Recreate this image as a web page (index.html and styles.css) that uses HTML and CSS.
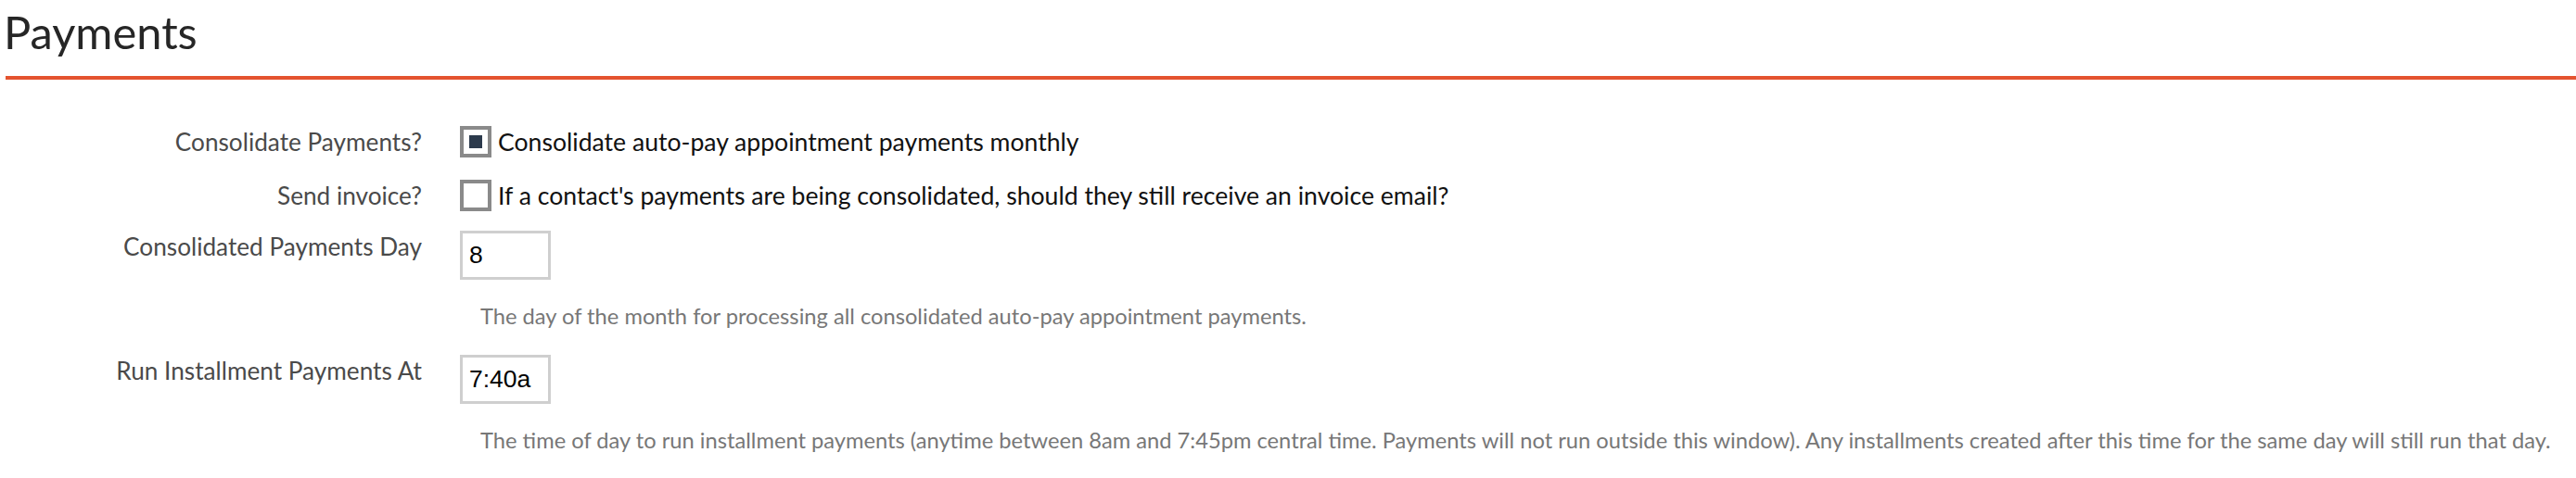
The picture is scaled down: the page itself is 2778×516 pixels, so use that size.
FILE: index.html
```html
<!DOCTYPE html>
<html lang="en">
<head>
<meta charset="utf-8">
<title>Payments</title>
<link rel="stylesheet" href="styles.css">
</head>
<body>
<div class="page">
  <h1 class="title">Payments</h1>
  <div class="form">
    <div class="row">
      <div class="label">Consolidate Payments?</div>
      <div class="control">
        <label class="check">
          <span class="box checked"><span class="mark"></span></span>
          <span class="check-text">Consolidate auto-pay appointment payments monthly</span>
        </label>
      </div>
    </div>
    <div class="row">
      <div class="label">Send invoice?</div>
      <div class="control">
        <label class="check">
          <span class="box"></span>
          <span class="check-text">If a contact's payments are being consolidated, should they still receive an invoice email?</span>
        </label>
      </div>
    </div>
    <div class="row row-field">
      <div class="label">Consolidated Payments Day</div>
      <div class="control">
        <input class="input" type="text" value="8">
        <p class="help">The day of the month for processing all consolidated auto-pay appointment payments.</p>
      </div>
    </div>
    <div class="row row-field">
      <div class="label">Run Installment Payments At</div>
      <div class="control">
        <input class="input" type="text" value="7:40a">
        <p class="help">The time of day to run installment payments (anytime between 8am and 7:45pm central time. Payments will not run outside this window). Any installments created after this time for the same day will still run that day.</p>
      </div>
    </div>
  </div>
</div>
</body>
</html>
```
FILE: styles.css
```css
html, body {
  margin: 0;
  padding: 0;
  background: #ffffff;
}

.page {
  font-family: "Lato", "Open Sans", sans-serif;
  color: #222;
}

.title {
  margin: 5px 0 0 6px;
  padding: 0 0 19px 0;
  font-size: 48.8px;
  line-height: 58px;
  font-weight: 400;
  color: #262626;
  text-indent: -2px;
  border-bottom: 4px solid #e4532f;
}

.form {
  display: flex;
  flex-direction: column;
  gap: 24px;
  padding-top: 50px;
}

.row {
  display: flex;
  align-items: flex-start;
}

.row-field {
  margin-top: -3px;
}

.row-field + .row-field {
  margin-top: 4px;
}

.label {
  flex: 0 0 455px;
  text-align: right;
  font-size: 26.2px;
  line-height: 32px;
  padding-top: 1px;
  color: #4a4a4a;
}

.control {
  margin-left: 41px;
  flex: 1 1 auto;
}

.check {
  display: flex;
  align-items: center;
  gap: 7px;
}

.box {
  box-sizing: border-box;
  width: 34px;
  height: 34px;
  border: 4px solid #8a8a8a;
  background: #fff;
  display: flex;
  align-items: center;
  justify-content: center;
  flex: 0 0 auto;
}

.mark {
  width: 14px;
  height: 14px;
  background: #2c3a4c;
}

.check-text {
  font-size: 26.6px;
  line-height: 32px;
  color: #111;
}

.input {
  box-sizing: border-box;
  display: block;
  width: 98px;
  height: 53px;
  margin: 0;
  padding: 0 0 0 7px;
  border: 3px solid #cfcfcf;
  border-radius: 0;
  font-family: "Liberation Sans", Arial, sans-serif;
  font-size: 26.5px;
  color: #000;
  background: #fff;
  outline: none;
}

.help {
  margin: 25px 0 0 0;
  padding-left: 22px;
  font-size: 23.7px;
  line-height: 28px;
  color: #777;
  white-space: nowrap;
}
```
